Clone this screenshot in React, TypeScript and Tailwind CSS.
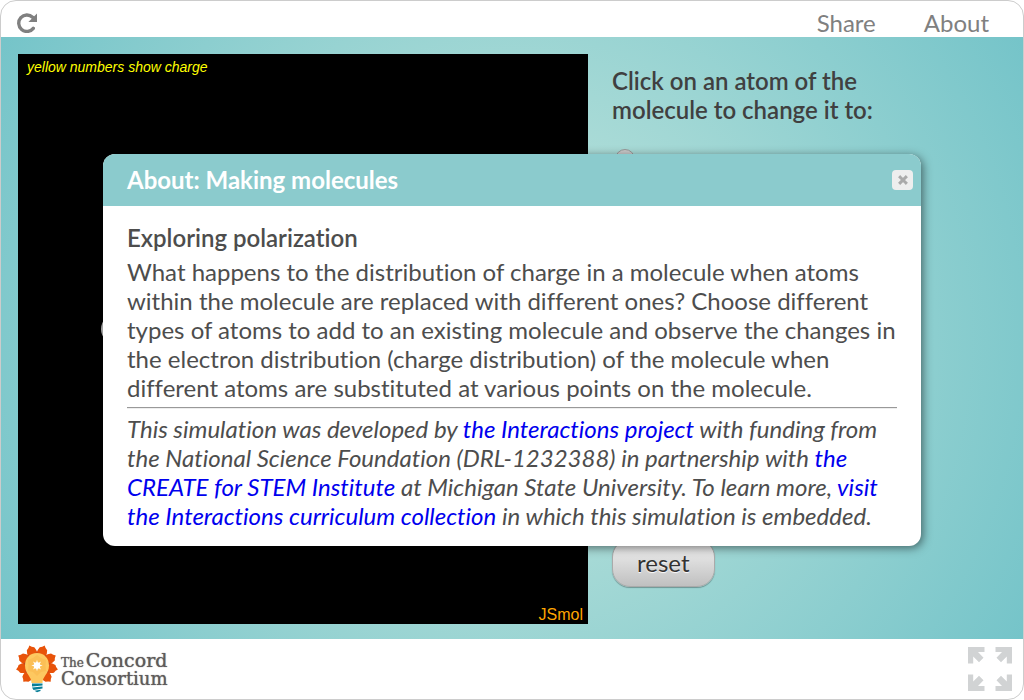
import React from "react";

const link = "text-[#0000ee] no-underline";

function ReloadIcon() {
  return (
    <svg viewBox="0 0 20 20" className="h-5 w-5" aria-hidden="true">
      <path d="M16.300 15.400A8.200 8.200 0 1 1 15.600 4.300" fill="none" stroke="#808080" strokeWidth="3.400" strokeLinecap="round" />
      <path d="M20 .4v8.600h-8.600z" fill="#808080" />
    </svg>
  );
}

function FullscreenIcon() {
  return (
    <svg viewBox="0 0 44 44" className="h-11 w-11" fill="#d1d3d4" aria-hidden="true">
      <path id="corner" d="M0 0H16.500V5H10L15.500 10.800L11 15.300L5.200 9.500V16.500H0Z" />
      <use href="#corner" transform="translate(44 0) scale(-1 1)" />
      <use href="#corner" transform="translate(0 44) scale(1 -1)" />
      <use href="#corner" transform="translate(44 44) scale(-1 -1)" />
    </svg>
  );
}

const petals = [-140, -101, -62, -21, 21, 62, 101, 140];
const overlaps = [-120, -81, -42, 0, 42, 81, 120];
const rays = [0, 45, 90, 135];

function BulbLogo() {
  return (
    <svg viewBox="0 0 42 48" className="h-12 w-[42px] shrink-0" aria-hidden="true">
      {petals.map((a) => (
        <path key={a} d="M21 20L16 9.500Q15.800 5.500 17 2.500Q19.500 1.500 21 -.8Q22.500 1.500 25 2.500Q26.200 5.500 26 9.500Z" fill="#e8530a" transform={`rotate(${a} 21 20.500)`} />
      ))}
      {overlaps.map((a) => (
        <path key={a} d="M21 7L24 11L21 14L18 11Z" fill="#b5432a" transform={`rotate(${a} 21 20.500)`} />
      ))}
      <path d="M21 8C13.500 8 9 13.500 9 20.500C9 29 15.500 31 15.500 38H26.500C26.500 31 33 29 33 20.500C33 13.500 28.500 8 21 8Z" fill="#fdc860" />
      <path d="M21 10L25 13L30 15L29.500 20.500L30 26L25 27L21 31L17 27L12 26L12.500 20.500L12 15L17 13Z" fill="#fbbf56" />
      {rays.map((a) => (
        <path key={a} d="M21 14.800L22.800 20.500L21 26.200L19.200 20.500Z" fill="#fff" transform={`rotate(${a} 21 20.500)`} />
      ))}
      <circle cx="21" cy="20.500" r="3.200" fill="#fff" />
      <path d="M16 38.500H26.500V40.500L16 41.500ZM16 42.500L26.500 41.500V43.500L17.500 45ZM18.500 45.800L24.500 44.800V46L21 47.200Z" fill="#087f98" />
    </svg>
  );
}

export default function App() {
  return (
    <div className="relative flex min-h-screen flex-col overflow-hidden rounded-[16px] border border-[#ccc] bg-white font-['Lato',sans-serif] text-2xl leading-[29px] text-[#4d4d4d] [font-variant-ligatures:none]">
      <header className="flex h-9 shrink-0 items-start justify-between pl-4 pr-[34px] pt-[7px]">
        <button type="button" aria-label="Reload" className="mt-[5px] cursor-pointer"><ReloadIcon /></button>
        <nav className="flex gap-12 text-[#808080]">
          <a href="#share">Share</a>
          <a href="#about">About</a>
        </nav>
      </header>

      <main className="flex grow gap-6 bg-[radial-gradient(circle,#c5e7de_0%,#75c4c9_100%)] px-[17px] pb-[15px] pt-[17px]">
        <section aria-label="Molecule viewer" className="relative flex w-[570px] shrink-0 flex-col justify-between bg-black font-['Liberation_Sans',sans-serif]">
          <p className="px-[9px] pt-1 text-sm leading-[18px] italic text-[#ffff00]">yellow numbers show charge</p>
          <span className="absolute left-[83px] top-[260px] size-[30px] rounded-full bg-[radial-gradient(circle,#fff,#999)]" />
          <p className="px-[5px] text-right text-base leading-[18px] text-[#ffa500]">JSmol</p>
        </section>
        <section className="flex w-[300px] flex-col items-start justify-between pb-9 pt-3">
          <div>
            <h2 className="font-semibold text-[#404040]">Click on an atom of the molecule to change it to:</h2>
            <input type="radio" name="atom" aria-label="Atom" className="mt-[25px] ml-[3px] block size-5 appearance-none rounded-full border border-[#999] bg-[#ccc]" />
          </div>
          <button type="button" className="mb-px h-12 cursor-pointer rounded-[18px] border border-[#aaa] bg-linear-to-b from-[#f5f5f5] to-[#c0c0c0] px-6 pb-[2px] text-[#333] shadow-[0_1px_1px_rgba(0,0,0,0.3)] [text-shadow:0_1px_1px_white]">reset</button>
        </section>
      </main>

      <footer className="flex h-[60px] shrink-0 items-center justify-between pl-[15px] pr-[11px]">
        <a href="#concord" className="flex items-center gap-[3px] font-['DejaVu_Serif',serif] text-[#5f5b5b] [text-shadow:0_0_1px_#6b6767]">
          <BulbLogo />
          <span className="flex flex-col text-lg leading-4">
            <span className="flex items-baseline gap-[2px]"><span className="text-xs leading-4">The</span><span className="text-[19px] leading-4">Concord</span></span>
            <span>Consortium</span>
          </span>
        </a>
        <button type="button" aria-label="Fullscreen" className="cursor-pointer"><FullscreenIcon /></button>
      </footer>

      <div className="absolute inset-0 flex items-center justify-center">
        <div role="dialog" aria-labelledby="title" className="w-[818px] overflow-hidden rounded-xl bg-white shadow-[2px_2px_10px_rgba(0,0,0,0.5)]">
          <div className="flex h-[52px] items-center justify-between bg-[#8bcbcd] pl-6 pr-2">
            <h1 id="title" className="pb-[2px] font-bold text-white">About: Making molecules</h1>
            <button type="button" aria-label="Close" className="flex h-5 w-[21px] cursor-pointer items-center justify-center rounded-[4px] bg-[#eee]">
              <svg viewBox="0 0 10 10" className="size-[10px]" aria-hidden="true"><path d="M2.200 2.200L7.800 7.800M7.800 2.200L2.200 7.800" stroke="#aaa" strokeWidth="3" strokeLinecap="square" /></svg>
            </button>
          </div>
          <div className="px-6 pb-4 pt-[17px]">
            <h2 className="mb-[5px] font-semibold">Exploring polarization</h2>
            <p>What happens to the distribution of charge in a molecule when atoms within the molecule are replaced with different ones? Choose different types of atoms to add to an existing molecule and observe the changes in the electron distribution (charge distribution) of the molecule when different atoms are substituted at various points on the molecule.</p>
            <hr className="mt-[5px] h-[2px] border-x-0 border-t border-b border-t-[#999] border-b-[#eee]" />
            <p className="mt-[5px] italic">This simulation was developed by <a href="#interactions" className={link}>the Interactions project</a> with funding from the National Science Foundation (DRL-1232388) in partnership with <a href="#create" className={link}>the CREATE for STEM Institute</a> at Michigan State University. To learn more, <a href="#curriculum" className={link}>visit the Interactions curriculum collection</a> in which this simulation is embedded.</p>
          </div>
        </div>
      </div>
    </div>
  );
}
